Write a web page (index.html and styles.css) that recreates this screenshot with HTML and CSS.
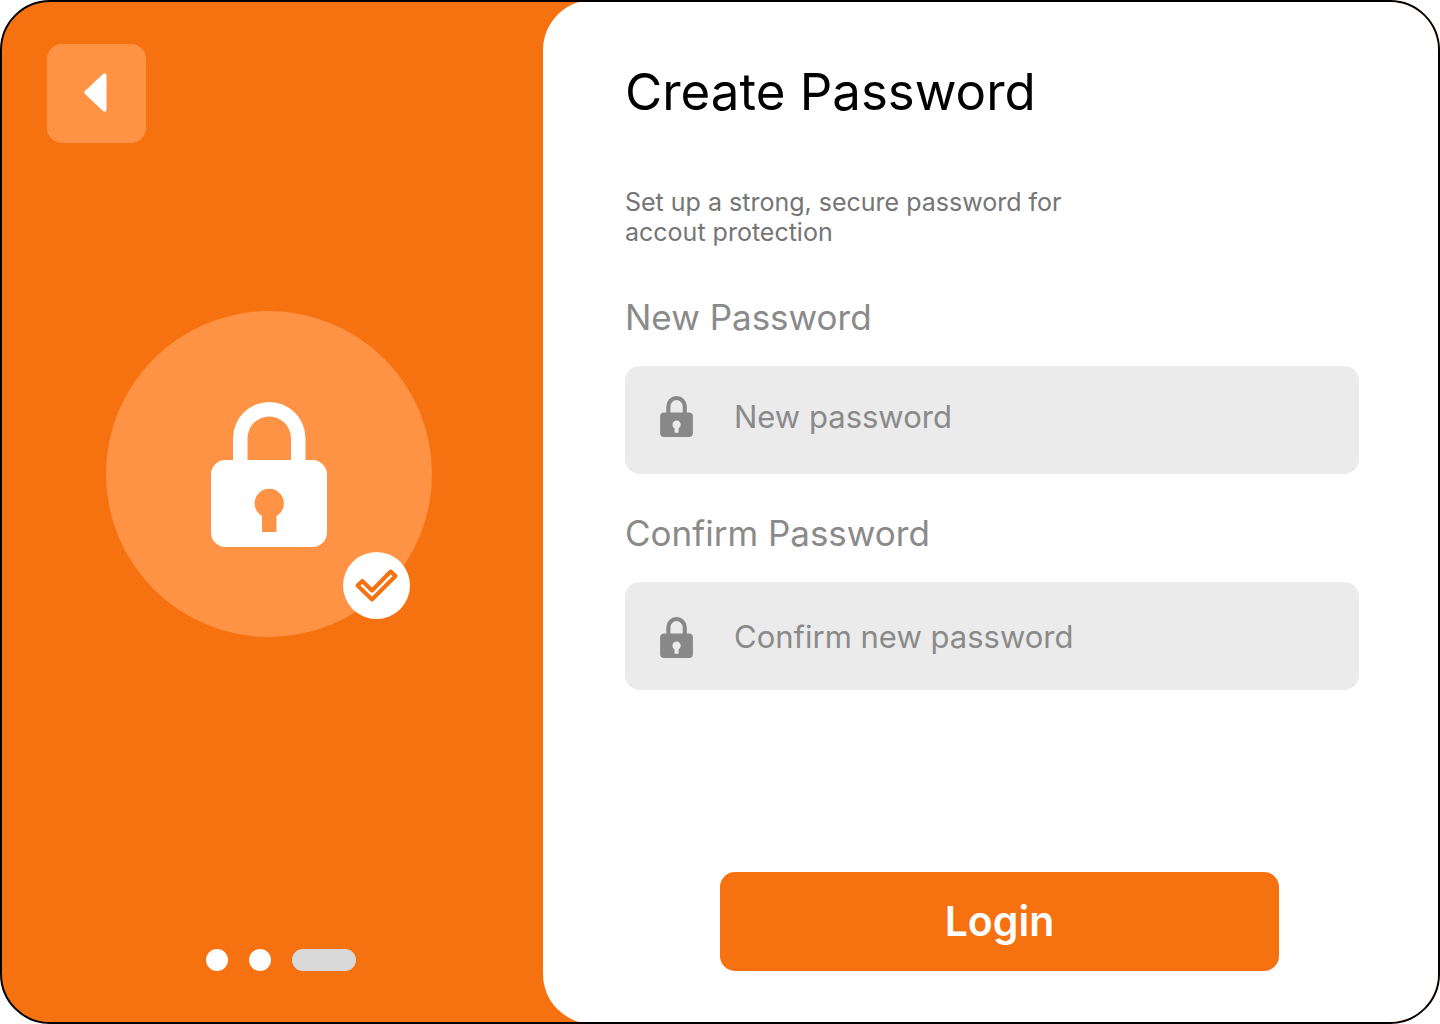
FILE: index.html
```html
<!DOCTYPE html>
<html lang="en">
<head>
<meta charset="utf-8">
<meta name="viewport" content="width=device-width, initial-scale=1">
<title>Create Password</title>
<link rel="stylesheet" href="styles.css">
</head>
<body>
<svg class="sprite" aria-hidden="true">
  <symbol id="lock" viewBox="0 0 116 145">
    <path fill-rule="evenodd" d="M22 58V36.250a36.250 36.250 0 0 1 72.500 0V58H101.500A14.500 14.500 0 0 1 116 72.500V130.500A14.500 14.500 0 0 1 101.500 145H14.500A14.500 14.500 0 0 1 0 130.500V72.500A14.500 14.500 0 0 1 14.500 58ZM36.500 58H80V36.250a21.750 21.750 0 0 0-43.500 0ZM51 130H65.500V114A14.600 14.600 0 1 0 51 114Z"/>
  </symbol>
</svg>
<main class="card">
  <section class="aside">
    <button class="back" type="button" aria-label="Back">
      <svg class="back-icon" viewBox="0 0 24 40"><path d="M1 18 19 1Q22.500-1 22.500 3V36Q22.500 40 19 38L1 21Q-.5 19.500 1 18Z"/></svg>
    </button>
    <div class="emblem">
      <svg class="emblem-lock" aria-hidden="true"><use href="#lock"/></svg>
      <span class="badge">
        <svg class="badge-icon" viewBox="0 0 67 67" aria-hidden="true"><path d="M14.500 33.500 19.300 29 29 38.500 47.700 19.500 52.500 24 29 47.500Z"/></svg>
      </span>
    </div>
    <div class="steps" aria-label="Step 3 of 3">
      <span class="step"></span>
      <span class="step"></span>
      <span class="step step-current"></span>
    </div>
  </section>
  <form class="panel">
    <h1 class="title">Create Password</h1>
    <p class="intro">Set up a strong, secure password for accout protection</p>
    <label class="label" for="new-password">New Password</label>
    <div class="field field-new">
      <svg class="field-icon" aria-hidden="true"><use href="#lock"/></svg>
      <input class="input" id="new-password" type="password" placeholder="New password">
    </div>
    <label class="label" for="confirm-password">Confirm Password</label>
    <div class="field">
      <svg class="field-icon" aria-hidden="true"><use href="#lock"/></svg>
      <input class="input" id="confirm-password" type="password" placeholder="Confirm new password">
    </div>
    <button class="login" type="submit">Login</button>
  </form>
</main>
</body>
</html>
```
FILE: styles.css
```css
* {
  box-sizing: border-box;
}

body {
  margin: 0;
  background: #fff;
  font-family: Inter, "Liberation Sans", sans-serif;
}

.sprite {
  display: none;
}

.card {
  display: grid;
  grid-template-columns: 541fr 895fr;
  min-height: 100vh;
  overflow: hidden;
  border: 2px solid #000;
  border-radius: 50px;
  background: #f67110;
}

.aside {
  display: flex;
  flex-direction: column;
  padding: 42px 45px 51px;
}

.back {
  display: flex;
  align-items: center;
  justify-content: center;
  width: 99px;
  height: 99px;
  padding: 0 2px 2px 0;
  border: 0;
  border-radius: 15px;
  background: #ff9345;
}

.back-icon {
  width: 24px;
  height: 40px;
  fill: #fff;
}

.emblem {
  position: relative;
  display: flex;
  align-items: center;
  justify-content: center;
  width: 326px;
  height: 326px;
  margin: 168px 0 0 59px;
  border-radius: 50%;
  background: #ff9345;
}

.emblem-lock {
  width: 116px;
  height: 145px;
  fill: #fff;
}

.badge {
  position: absolute;
  right: 22px;
  bottom: 18px;
  width: 67px;
  height: 67px;
  border-radius: 50%;
  background: #fff;
}

.badge-icon {
  display: block;
  fill: none;
  stroke: #f67110;
  stroke-width: 4;
  stroke-linejoin: round;
}

.steps {
  display: flex;
  gap: 21px;
  margin: auto 0 0 159px;
}

.step {
  width: 22px;
  height: 22px;
  border-radius: 11px;
  background: #fff;
}

.step-current {
  width: 64px;
  background: #d9d9d9;
}

.panel {
  display: flex;
  flex-direction: column;
  margin: -2px -2px -2px 0;
  padding: 60px 81px 53px 82px;
  border-radius: 50px;
  background: #fff;
}

.title {
  margin: 0 0 63px;
  font-size: 51px;
  line-height: 64px;
  font-weight: 400;
  color: #000;
}

.intro {
  max-width: 480px;
  margin: 0 0 48px;
  font-size: 25px;
  line-height: 30px;
  color: #757575;
}

.label {
  font-size: 35px;
  line-height: 44px;
  color: #8a8a8a;
}

.field {
  display: flex;
  align-items: center;
  gap: 41px;
  height: 108px;
  margin: 27px 0 37px;
  padding: 2px 35px 0;
  border-radius: 15px;
  background: #ebebeb;
}

.field-new {
  padding-bottom: 9px;
}

.field-icon {
  flex: none;
  width: 33px;
  height: 41px;
  fill: #888;
}

.input {
  flex: 1;
  min-width: 0;
  padding: 0;
  border: 0;
  outline: 0;
  background: none;
  font: inherit;
  font-size: 31px;
  line-height: 40px;
  color: #333;
}

.input::placeholder {
  color: #8a8a8a;
  opacity: 1;
}

.login {
  height: 99px;
  margin: auto 80px 0 95px;
  padding: 0 0 2px;
  border: 0;
  border-radius: 15px;
  background: #f67110;
  font: inherit;
  font-size: 41px;
  font-weight: 600;
  color: #fff;
}
```
